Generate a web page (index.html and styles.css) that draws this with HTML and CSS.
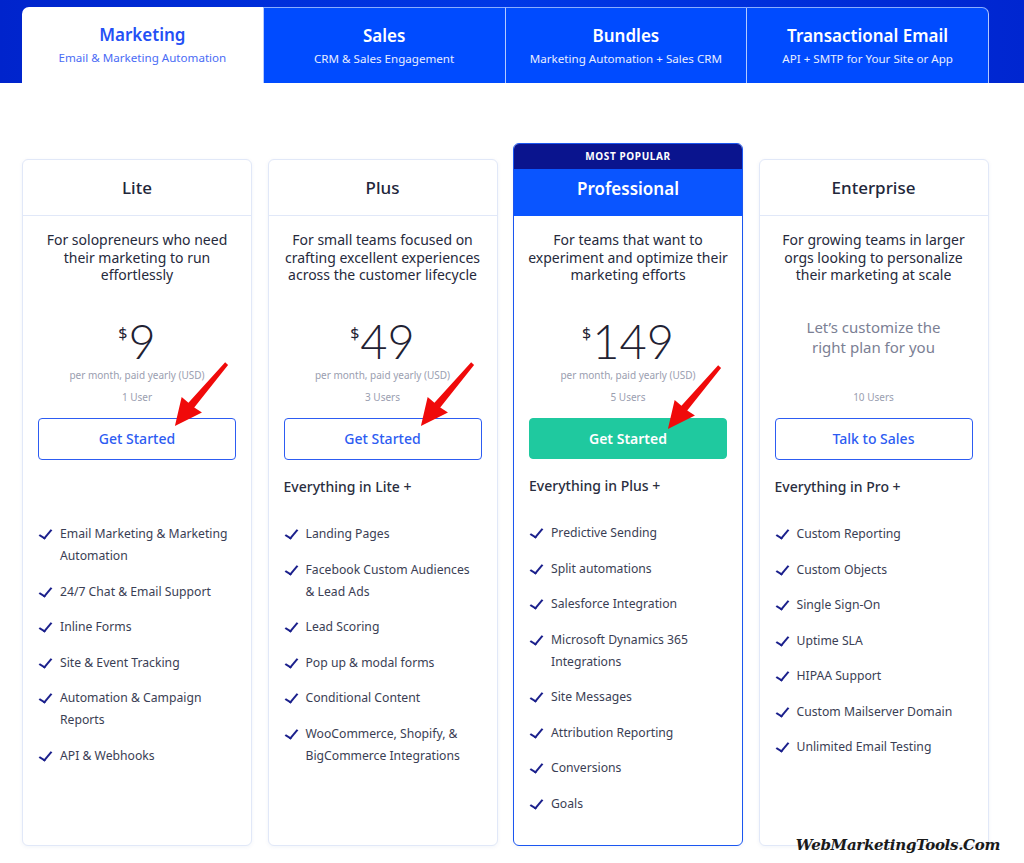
FILE: index.html
```html
<!DOCTYPE html>
<html lang="en">
<head>
    <meta charset="UTF-8">
    <meta name="viewport" content="width=device-width, initial-scale=1.0">
    <title>Pricing - Marketing</title>
    <link rel="stylesheet" href="styles.css">
</head>
<body>
    <div class="plan-nav">
        <div class="wrap tabs">
            <div class="tab active">
                <h3>Marketing</h3>
                <p>Email &amp; Marketing Automation</p>
            </div>
            <div class="tab">
                <h3>Sales</h3>
                <p>CRM &amp; Sales Engagement</p>
            </div>
            <div class="tab">
                <h3>Bundles</h3>
                <p>Marketing Automation + Sales CRM</p>
            </div>
            <div class="tab last">
                <h3>Transactional Email</h3>
                <p>API + SMTP for Your Site or App</p>
            </div>
        </div>
    </div>

    <div class="wrap plans">
        <!-- Lite -->
        <div class="plan">
            <div class="plan-head">Lite</div>
            <div class="plan-body">
                <p class="desc">For solopreneurs who need their marketing to run effortlessly</p>
                <div class="price-box">
                    <div class="price"><sup>$</sup>9</div>
                    <div class="billing">per month, paid yearly (USD)</div>
                </div>
                <div class="users">1 User</div>
                <div class="cta">
                    <a class="btn">Get Started</a>
                    <svg class="arrow" viewBox="0 0 60 70"><polygon points="3,67 10,37 17,43 55,1 58,4 23,48 31,53"/></svg>
                </div>
                <div class="includes"></div>
                <ul class="features">
                    <li>Email Marketing &amp; Marketing Automation</li>
                    <li>24/7 Chat &amp; Email Support</li>
                    <li>Inline Forms</li>
                    <li>Site &amp; Event Tracking</li>
                    <li>Automation &amp; Campaign Reports</li>
                    <li>API &amp; Webhooks</li>
                </ul>
            </div>
        </div>

        <!-- Plus -->
        <div class="plan">
            <div class="plan-head">Plus</div>
            <div class="plan-body">
                <p class="desc">For small teams focused on crafting excellent experiences across the customer lifecycle</p>
                <div class="price-box">
                    <div class="price"><sup>$</sup>49</div>
                    <div class="billing">per month, paid yearly (USD)</div>
                </div>
                <div class="users">3 Users</div>
                <div class="cta">
                    <a class="btn">Get Started</a>
                    <svg class="arrow" viewBox="0 0 60 70"><polygon points="3,67 10,37 17,43 55,1 58,4 23,48 31,53"/></svg>
                </div>
                <div class="includes">Everything in Lite +</div>
                <ul class="features">
                    <li>Landing Pages</li>
                    <li>Facebook Custom Audiences &amp; Lead Ads</li>
                    <li>Lead Scoring</li>
                    <li>Pop up &amp; modal forms</li>
                    <li>Conditional Content</li>
                    <li>WooCommerce, Shopify, &amp; BigCommerce Integrations</li>
                </ul>
            </div>
        </div>

        <!-- Professional -->
        <div class="plan popular">
            <div class="badge">MOST POPULAR</div>
            <div class="plan-head">Professional</div>
            <div class="plan-body">
                <p class="desc">For teams that want to experiment and optimize their marketing efforts</p>
                <div class="price-box">
                    <div class="price"><sup>$</sup>149</div>
                    <div class="billing">per month, paid yearly (USD)</div>
                </div>
                <div class="users">5 Users</div>
                <div class="cta">
                    <a class="btn solid">Get Started</a>
                    <svg class="arrow" viewBox="0 0 60 70"><polygon points="3,67 10,37 17,43 55,1 58,4 23,48 31,53"/></svg>
                </div>
                <div class="includes">Everything in Plus +</div>
                <ul class="features">
                    <li>Predictive Sending</li>
                    <li>Split automations</li>
                    <li>Salesforce Integration</li>
                    <li>Microsoft Dynamics 365 Integrations</li>
                    <li>Site Messages</li>
                    <li>Attribution Reporting</li>
                    <li>Conversions</li>
                    <li>Goals</li>
                </ul>
            </div>
        </div>

        <!-- Enterprise -->
        <div class="plan">
            <div class="plan-head">Enterprise</div>
            <div class="plan-body">
                <p class="desc">For growing teams in larger orgs looking to personalize their marketing at scale</p>
                <div class="price-box">
                    <p class="custom">Let’s customize the right plan for you</p>
                </div>
                <div class="users">10 Users</div>
                <div class="cta">
                    <a class="btn">Talk to Sales</a>
                </div>
                <div class="includes">Everything in Pro +</div>
                <ul class="features">
                    <li>Custom Reporting</li>
                    <li>Custom Objects</li>
                    <li>Single Sign-On</li>
                    <li>Uptime SLA</li>
                    <li>HIPAA Support</li>
                    <li>Custom Mailserver Domain</li>
                    <li>Unlimited Email Testing</li>
                </ul>
            </div>
        </div>
    </div>

    <div class="watermark">WebMarketingTools.Com</div>
</body>
</html>
```

FILE: styles.css
```css
* {
    margin: 0;
    padding: 0;
    box-sizing: border-box;
}

body {
    font-family: 'Noto Sans', 'Open Sans', sans-serif;
    color: #22263a;
    background: #fff;
    position: relative;
    height: 863px;
    overflow: hidden;
}

.wrap {
    width: 967px;
    margin-left: 22px;
}

/* top product tabs */
.plan-nav {
    height: 83px;
    padding-top: 7px;
    background: linear-gradient(90deg, #0024cc 0%, #0038e6 50%, #0026d0 100%);
}

.tabs {
    display: flex;
    height: 76px;
}

.tab {
    flex: 1;
    background: #004bff;
    color: #fff;
    text-align: center;
    padding-top: 16px;
    border-top: 1px solid rgba(255, 255, 255, 0.55);
    border-left: 1px solid rgba(255, 255, 255, 0.7);
}

.tab h3 {
    font-size: 17px;
    font-weight: 600;
    line-height: 24px;
}

.tab p {
    font-size: 11.6px;
    line-height: 18px;
    margin-top: 2px;
    color: #e8edff;
}

.tab.active {
    background: #fff;
    color: #2450f5;
    border: none;
    border-radius: 7px 0 0 0;
}

.tab.active p {
    color: #4a6cf5;
}

.tab.last {
    border-right: 1px solid rgba(255, 255, 255, 0.7);
    border-radius: 0 7px 0 0;
}

/* plan cards */
.plans {
    display: grid;
    grid-template-columns: repeat(4, 230px);
    gap: 15.5px;
    margin-top: 60px;
}

.plan {
    margin-top: 16px;
    height: 687px;
    border: 1px solid #e1e8f8;
    border-radius: 6px;
    box-shadow: 0 1px 4px rgba(20, 60, 160, 0.06);
    background: #fff;
}

.plan-head {
    height: 56px;
    display: flex;
    align-items: center;
    justify-content: center;
    font-size: 17px;
    font-weight: 500;
    border-bottom: 1px solid #e1e8f8;
}

.plan-body {
    padding: 15px 15px 0;
}

.desc {
    height: 53px;
    margin: 0 -4px;
    font-size: 14px;
    line-height: 17.5px;
    text-align: center;
    color: #262a3c;
}

.price-box {
    height: 64px;
    margin-top: 34px;
    text-align: center;
}

.price {
    font-family: 'Lato', sans-serif;
    font-weight: 300;
    font-size: 47px;
    line-height: 47px;
    color: #1f2233;
}

.price sup {
    font-family: 'Noto Sans', sans-serif;
    font-size: 16px;
    font-weight: 400;
    vertical-align: top;
    position: relative;
    top: -8px;
    margin-right: 1px;
}

.billing {
    margin-top: 3px;
    font-size: 10px;
    line-height: 14px;
    color: #9a9eb0;
}

.custom {
    font-size: 15px;
    line-height: 19.5px;
    color: #7b8094;
    padding: 0 14px;
}

.users {
    margin-top: 8px;
    font-size: 10px;
    line-height: 14px;
    text-align: center;
    color: #9a9eb0;
}

.cta {
    position: relative;
    margin-top: 14px;
}

.btn {
    display: block;
    height: 42px;
    line-height: 39px;
    text-align: center;
    font-size: 14px;
    font-weight: 500;
    color: #2d5cf2;
    border: 1.5px solid #2d5cf2;
    border-radius: 4px;
    cursor: pointer;
}

.btn.solid {
    background: #1fc99f;
    border-color: #1fc99f;
    color: #fff;
    font-weight: 600;
}

/* red annotation arrows */
.arrow {
    position: absolute;
    width: 58px;
    height: 68px;
    left: 134px;
    top: -57px;
    fill: #f00a0a;
}

.popular .arrow {
    top: -54px;
    left: 136px;
}

.includes {
    height: 18px;
    margin-top: 18px;
    font-size: 14px;
    line-height: 18px;
    font-weight: 500;
    color: #2a2e40;
}

.features {
    list-style: none;
    margin-top: 27px;
}

.features li {
    position: relative;
    padding-left: 22px;
    font-size: 12.2px;
    line-height: 22px;
    color: #3a3e54;
    margin-bottom: 13.5px;
}

.features li::before {
    content: '';
    position: absolute;
    left: 4px;
    top: 4px;
    width: 5px;
    height: 10px;
    border-right: 2px solid #1b208c;
    border-bottom: 2px solid #1b208c;
    transform: rotate(40deg) skewY(-8deg);
}

/* popular card */
.popular {
    margin-top: 0;
    height: 703px;
    border: 1.5px solid #1b56f0;
    overflow: hidden;
}

.badge {
    height: 25px;
    background: #0a148e;
    color: #fff;
    font-size: 10px;
    font-weight: 700;
    letter-spacing: 0.6px;
    text-align: center;
    line-height: 25px;
}

.popular .plan-head {
    height: 47px;
    padding-bottom: 9px;
    background: #0a55ff;
    color: #fff;
    font-weight: 600;
    border-bottom: none;
}

.popular .plan-body {
    padding-top: 15px;
}

.popular .cta {
    margin-top: 14px;
}

.popular .btn {
    height: 41px;
}

.watermark {
    position: absolute;
    right: 24px;
    bottom: 9px;
    font-family: 'DejaVu Serif', serif;
    font-style: italic;
    font-weight: 700;
    font-size: 15px;
    color: #1a1a1a;
    letter-spacing: -0.3px;
}
```
